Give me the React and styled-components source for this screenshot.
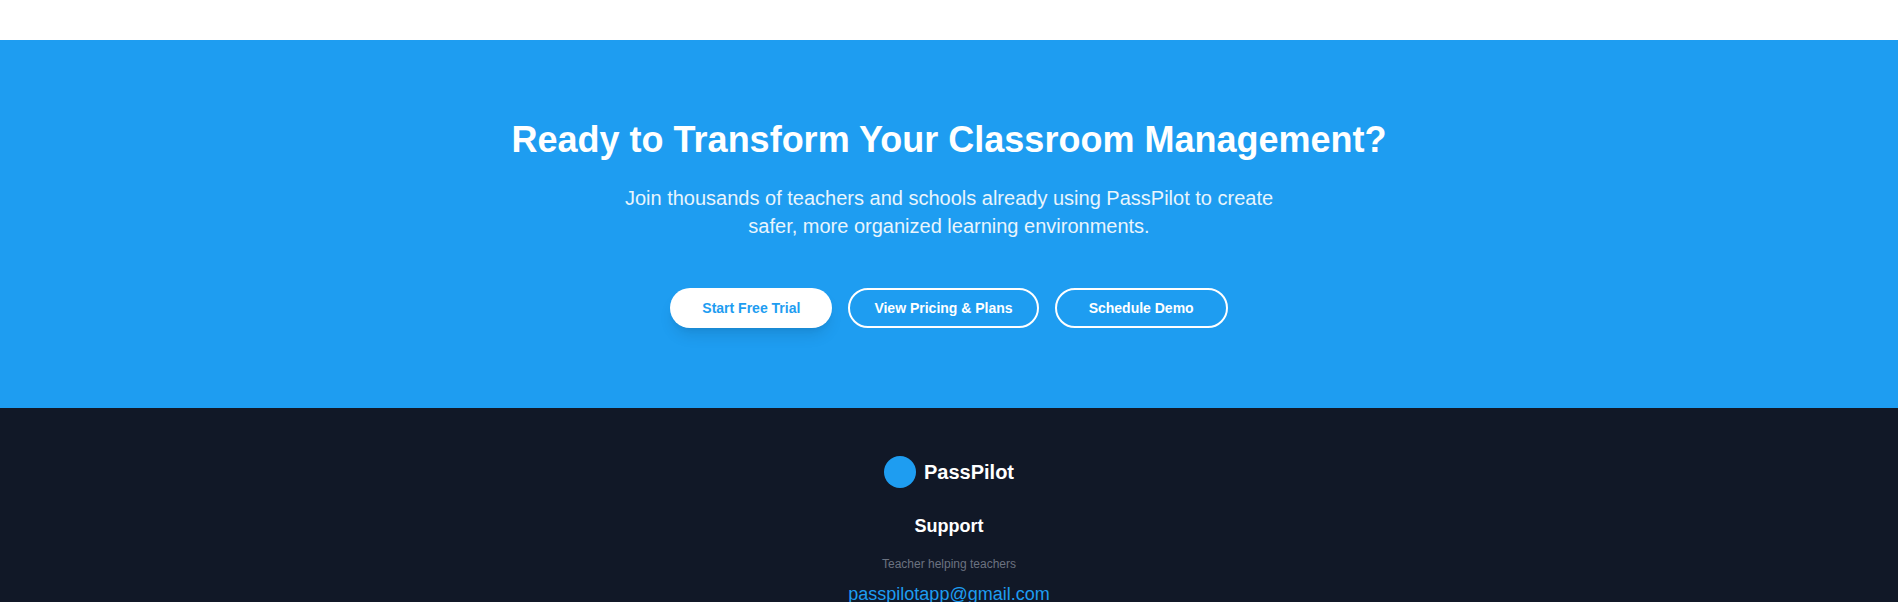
import React from 'react';
import styled, { createGlobalStyle } from 'styled-components';

const BRAND_BLUE = '#1e9df1';

const GlobalStyle = createGlobalStyle`
  *, *::before, *::after { box-sizing: border-box; }
  html { scrollbar-width: none; }
  body { margin: 0; background: #fff; font-family: "Liberation Sans", Arial, sans-serif; font-size: 16px; line-height: 24px; }
  h2, h3, p { margin: 0; }
`;

const Page = styled.main`
  padding-top: 40px;
`;

const CallToAction = styled.section`
  display: flex;
  flex-direction: column;
  align-items: center;
  padding: 80px 24px;
  background: ${BRAND_BLUE};
  color: #fff;
  text-align: center;
`;

const Headline = styled.h2`
  margin-bottom: 24px;
  font-size: 36px;
  line-height: 40px;
  font-weight: 700;
`;

const Lead = styled.p`
  max-width: 672px;
  margin-bottom: 48px;
  font-size: 20px;
  line-height: 28px;
  opacity: 0.9;
`;

const Actions = styled.div`
  display: flex;
  flex-wrap: wrap;
  justify-content: center;
  gap: 16px;
`;

const ActionButton = styled.button`
  height: 40px;
  padding: 0 ${(p) => (p.$wide ? 32 : 24)}px;
  border: ${(p) => (p.$solid ? '0' : '2px solid #fff')};
  border-radius: 20px;
  background: ${(p) => (p.$solid ? '#fff' : 'transparent')};
  color: ${(p) => (p.$solid ? BRAND_BLUE : '#fff')};
  box-shadow: ${(p) => (p.$solid ? '0 10px 15px -3px rgba(0,0,0,.1), 0 4px 6px -4px rgba(0,0,0,.1)' : 'none')};
  font: 600 14px/20px "Liberation Sans", Arial, sans-serif;
  cursor: pointer;
`;

const Footer = styled.footer`
  display: flex;
  flex-direction: column;
  align-items: center;
  padding: 48px 24px;
  background: #111827;
  color: #fff;
`;

const Brand = styled.div`
  display: flex;
  align-items: center;
  gap: 8px;
  margin-bottom: 24px;
  font-size: 20px;
  line-height: 28px;
  font-weight: 700;
`;

const BrandMark = styled.span`
  width: 32px;
  height: 32px;
  border-radius: 50%;
  background: ${BRAND_BLUE};
`;

const SupportTitle = styled.h3`
  margin-bottom: 16px;
  font-size: 18px;
  line-height: 28px;
  font-weight: 600;
`;

const Tagline = styled.p`
  margin-bottom: 8px;
  color: #6b7280;
  font-size: 12px;
  line-height: 16px;
`;

const EmailLink = styled.a`
  color: ${BRAND_BLUE};
  font-size: 18px;
  line-height: 28px;
  text-decoration: none;
`;

export default function App() {
  return (
    <>
      <GlobalStyle />
      <Page>
        <CallToAction>
          <Headline>Ready to Transform Your Classroom Management?</Headline>
          <Lead>
            Join thousands of teachers and schools already using PassPilot to create safer, more
            organized learning environments.
          </Lead>
          <Actions>
            <ActionButton type="button" $solid $wide>Start Free Trial</ActionButton>
            <ActionButton type="button">View Pricing &amp; Plans</ActionButton>
            <ActionButton type="button" $wide>Schedule Demo</ActionButton>
          </Actions>
        </CallToAction>
        <Footer>
          <Brand>
            <BrandMark />
            PassPilot
          </Brand>
          <SupportTitle>Support</SupportTitle>
          <Tagline>Teacher helping teachers</Tagline>
          <EmailLink href="mailto:passpilotapp@gmail.com">passpilotapp@gmail.com</EmailLink>
        </Footer>
      </Page>
    </>
  );
}
